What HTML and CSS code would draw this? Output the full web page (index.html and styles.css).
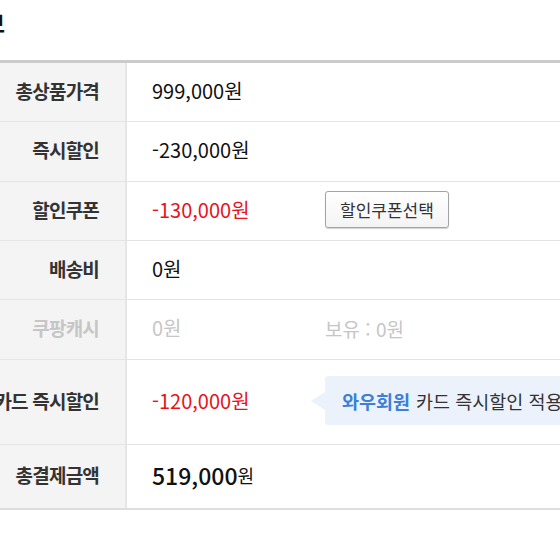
FILE: index.html
```html
<!DOCTYPE html>
<html lang="ko">
<head>
<meta charset="utf-8">
<link rel="stylesheet" href="styles.css">
</head>
<body>
<div class="page">
  <h2 class="title">결제정보</h2>
  <div class="table">
    <div class="row r1">
      <div class="label">총상품가격</div>
      <div class="value">999,000원</div>
    </div>
    <div class="row r2">
      <div class="label">즉시할인</div>
      <div class="value">-230,000원</div>
    </div>
    <div class="row r3">
      <div class="label">할인쿠폰</div>
      <div class="value red">-130,000원</div>
      <div class="extra"><button class="btn" type="button">할인쿠폰선택</button></div>
    </div>
    <div class="row r4">
      <div class="label">배송비</div>
      <div class="value">0원</div>
    </div>
    <div class="row r5 disabled">
      <div class="label">쿠팡캐시</div>
      <div class="value">0원</div>
      <div class="extra">보유 : 0원</div>
    </div>
    <div class="row r6">
      <div class="label">카드 즉시할인</div>
      <div class="value red">-120,000원</div>
      <div class="extra">
        <div class="tip"><b class="wow">와우회원</b> 카드 즉시할인 적용</div>
      </div>
    </div>
    <div class="row r7">
      <div class="label">총결제금액</div>
      <div class="value total"><span class="num">519,000</span><span class="won">원</span></div>
    </div>
  </div>
</div>
</body>
</html>
```
FILE: styles.css
```css
html, body {
  margin: 0;
  padding: 0;
  background: #fff;
}
body {
  font-family: "Noto Sans CJK KR", "Noto Sans", sans-serif;
  color: #111;
  overflow: hidden;
}
.page {
  margin-left: -40px;
  width: 680px;
}
.title {
  margin: 0 0 0 -36px;
  height: 60px;
  font-size: 22px;
  font-weight: bold;
  line-height: 44px;
  color: #111;
  white-space: nowrap;
}
.table {
  border-top: 3px solid #cbcbcb;
}
.row {
  display: flex;
  border-bottom: 1px solid #e4e4e4;
  height: 58px;
}
.r2, .r5 { height: 59px; }
.r6 { height: 84px; }
.r7 { height: 63px; border-bottom: 2px solid #dedede; }
.label {
  width: 139px;
  flex: none;
  padding-right: 26px;
  padding-bottom: 4px;
  background: #f4f4f4;
  border-right: 2px solid #e6e6e6;
  display: flex;
  align-items: center;
  justify-content: flex-end;
  font-size: 19px;
  letter-spacing: -0.8px;
  font-weight: bold;
  color: #333;
  white-space: nowrap;
}
.value {
  width: 173px;
  flex: none;
  padding-left: 25px;
  padding-bottom: 4px;
  display: flex;
  align-items: center;
  font-size: 20px;
  color: #111;
  white-space: nowrap;
}
.red { color: #e8131c; }
.extra {
  flex: 1;
  display: flex;
  align-items: center;
  padding-bottom: 3px;
  font-size: 19px;
  white-space: nowrap;
}
.disabled .label, .disabled .value, .disabled .extra { color: #c6c6c6; }
.btn {
  font-family: inherit;
  font-size: 17px;
  color: #333;
  height: 37px;
  padding: 0 14px;
  background: linear-gradient(#ffffff, #f4f4f4);
  border: 1px solid #a3a3a3;
  border-radius: 3px;
  box-shadow: 0 1px 1px rgba(0,0,0,0.18);
}
.tip {
  position: relative;
  height: 49px;
  padding-left: 17px;
  display: flex;
  align-items: center;
  background: #ecf2fc;
  border-radius: 3px 0 0 3px;
  font-size: 18.5px;
  color: #333;
  flex: 1;
}
.tip::before {
  content: "";
  position: absolute;
  left: -14px;
  top: 50%;
  margin-top: -9px;
  border-style: solid;
  border-width: 9px 14px 9px 0;
  border-color: transparent #ecf2fc transparent transparent;
}
.wow {
  color: #3c7fd6;
  font-weight: bold;
  margin-right: 6px;
}
.total .num {
  font-size: 23px;
  font-weight: 500;
}
.total .won {
  font-size: 18px;
}
```
